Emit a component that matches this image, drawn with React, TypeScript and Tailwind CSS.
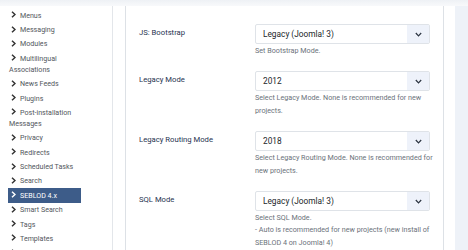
import React from "react";

const menu = [
  "Menus",
  "Messaging",
  "Modules",
  "Multilingual Associations",
  "News Feeds",
  "Plugins",
  "Post-installation Messages",
  "Privacy",
  "Redirects",
  "Scheduled Tasks",
  "Search",
  "SEBLOD 4.x",
  "Smart Search",
  "Tags",
  "Templates",
  "User Actions Log",
];

const fields = [
  { label: "JS: Bootstrap", value: "Legacy (Joomla! 3)", help: ["Set Bootstrap Mode."] },
  {
    label: "Legacy Mode",
    value: "2012",
    help: ["Select Legacy Mode. None is recommended for new", "projects."],
  },
  {
    label: "Legacy Routing Mode",
    value: "2018",
    help: ["Select Legacy Routing Mode. None is recommended for", "new projects."],
  },
  {
    label: "SQL Mode",
    value: "Legacy (Joomla! 3)",
    help: [
      "Select SQL Mode.",
      "- Auto is recommended for new projects (new install of",
      "SEBLOD 4 on Joomla! 4)",
      "- Legacy is recommended for existing projects updated",
    ],
  },
];

const Chevron = ({ light }: { light: boolean }) => (
  <svg width="5" height="7" viewBox="0 0 5 7" className="inline-block mr-[4px] align-[-0.5px]">
    <path d="M1 0.8 L4 3.5 L1 6.2" fill="none" stroke={light ? "#fff" : "#333"} strokeWidth="1.5" />
  </svg>
);

const App = () => {
  return (
    <div className="w-[468px] h-[250px] overflow-hidden bg-white font-['Roboto',sans-serif]">
      <div className="h-[6px] bg-gradient-to-b from-[#eef1f5] to-[#f8f9fb]" />
      <div className="flex h-[244px]">
        <div className="w-[113px] shrink-0 border-r border-r-[#e3e6ea] pt-[2px] pl-[8px]">
          {menu.map((m) => (
            <div
              key={m}
              className={
                "w-[73px] px-[1px] py-[1.7px] text-[7.1px] leading-[11px] " +
                (m === "SEBLOD 4.x" ? "bg-[#3d5c89] text-white" : "text-[#52575d]")
              }
            >
              <span className="pl-[2px]">
                <Chevron light={m === "SEBLOD 4.x"} />
              </span>
              {m}
            </div>
          ))}
        </div>
        <div className="w-[12px] shrink-0" />
        <div className="w-[319px] shrink-0 border-l border-r border-[#dde1e6] pl-[13px] pt-[18px]">
          {fields.map((f) => (
            <div key={f.label} className="flex mb-[14px]">
              <div className="w-[116px] shrink-0 pt-[3px] text-[7.7px] leading-[12px] text-[#1f3350]">
                {f.label}
              </div>
              <div className="w-[175px] shrink-0">
                <div className="h-[20px] flex border border-[#dfe3e8] rounded-[2px] overflow-hidden">
                  <div className="flex-1 pl-[7px] flex items-center text-[8.3px] text-[#22262a]">
                    {f.value}
                  </div>
                  <div className="w-[22px] bg-[#eef2fa] flex items-center justify-center">
                    <svg width="7" height="5" viewBox="0 0 7 5">
                      <path d="M0.8 1 L3.5 3.8 L6.2 1" fill="none" stroke="#2b3440" strokeWidth="1.2" />
                    </svg>
                  </div>
                </div>
                <div className="mt-[1px] text-[7.2px] leading-[12.4px] text-[#6b727a]">
                  {f.help.map((h) => (
                    <div key={h} className="whitespace-nowrap">{h}</div>
                  ))}
                </div>
              </div>
            </div>
          ))}
        </div>
        <div className="w-[11px] shrink-0" />
        <div className="flex-1 bg-[#eef2f8]" />
      </div>
    </div>
  );
};

export default App;
